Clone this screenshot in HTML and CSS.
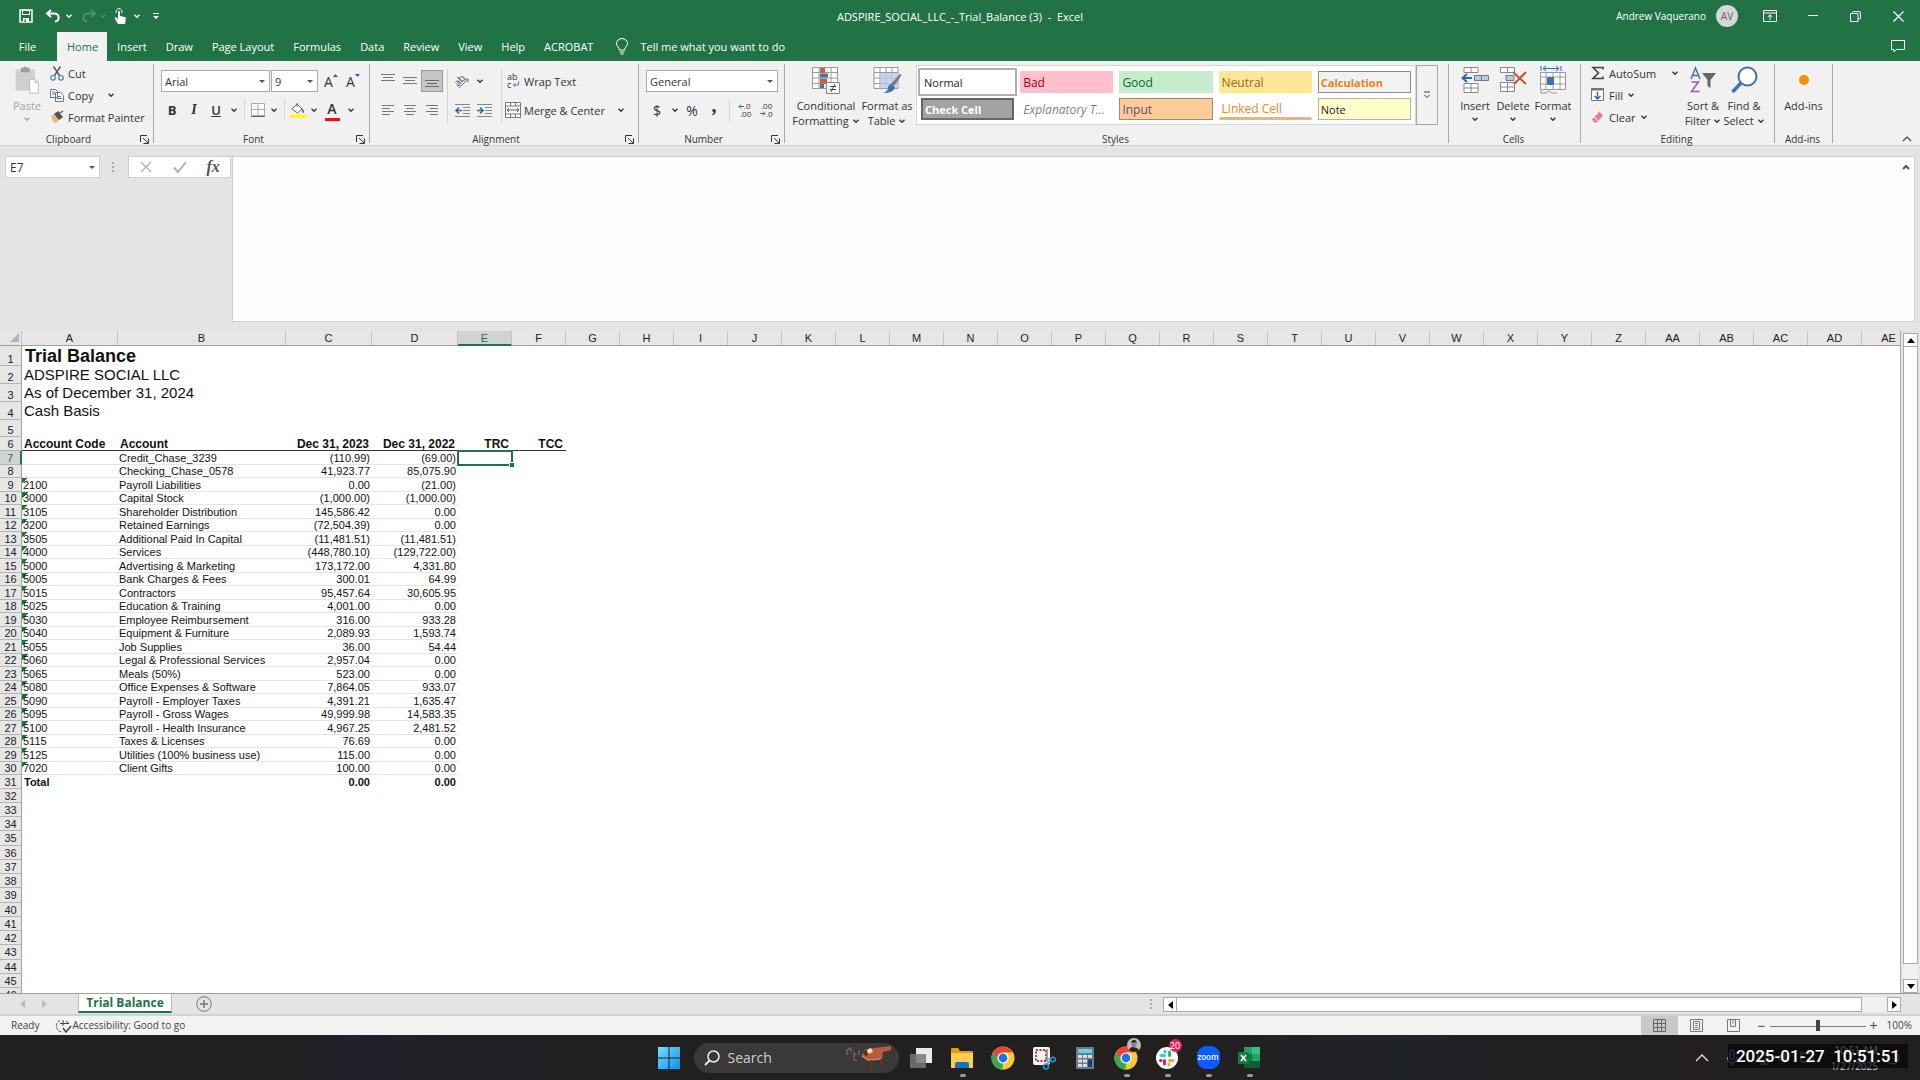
FILE: index.html
```html
<!DOCTYPE html>
<html lang="en">
<head>
<meta charset="utf-8">
<title>ADSPIRE_SOCIAL_LLC_-_Trial_Balance (3) - Excel</title>
<link rel="stylesheet" href="styles.css">
</head>
<body>
<svg class="sprite" aria-hidden="true">
  <symbol id="chev" viewBox="0 0 8 8"><path d="M1.500 2.800L4 5.300l2.500-2.500" fill="none" stroke="currentColor" stroke-width="1.300"/></symbol>
  <symbol id="launch" viewBox="0 0 9 9"><path d="M.5 7V.5H7M3 3l5 5M8.500 3.500v5h-5" fill="none" stroke="currentColor"/></symbol>
  <symbol id="chrome" viewBox="0 0 24 24"><circle cx="12" cy="12" r="11.500" fill="#fcc934"/><path d="M2 6.250A11.500 11.500 0 0 1 22 6.250H12L7 14z" fill="#ea4335"/><path d="M2 6.250L7.200 14.800 12 17.500 11.300 23.500A11.500 11.500 0 0 1 2 6.250z" fill="#34a853"/><circle cx="12" cy="12" r="5.600" fill="#fff"/><circle cx="12" cy="12" r="4.400" fill="#1a73e8"/></symbol>
</svg>

<header class="titlebar">
  <div class="quick">
    <button class="q-save" aria-label="Save"><svg width="14" height="14" viewBox="0 0 14 14"><path d="M1 1h12v12H1z" fill="none" stroke="#fff" stroke-width="1.500"/><path d="M3 1h8v5H3zM4 9h6v4H4z" fill="#fff"/><path d="M4 2h6v3H4z" fill="#217346"/><path d="M5.500 10.500H7V13H5.500z" fill="#217346"/></svg></button>
    <button class="q-undo" aria-label="Undo"><svg width="16" height="14" viewBox="0 0 16 14"><path d="M6 1L2 4.500 6 8M2 4.500h7c6 0 6 7.500 1 8" fill="none" stroke="#fff" stroke-width="2"/></svg></button>
    <button class="q-chev" aria-label="Undo list"><svg width="8" height="8"><use href="#chev"/></svg></button>
    <button class="q-redo" aria-label="Redo"><svg width="16" height="14" viewBox="0 0 16 14"><path d="M10 1l4 3.500L10 8M14 4.500H7c-6 0-6 7.500-1 8" fill="none" stroke="#4c9068" stroke-width="2"/></svg></button>
    <button class="q-chev dim" aria-label="Redo list"><svg width="8" height="8"><use href="#chev"/></svg></button>
    <button class="q-touch" aria-label="Touch mode"><svg width="13" height="17" viewBox="0 0 13 17"><path d="M4 16L.8 10.500c-.5-1.500 1-1.500 1.600-.8L4 11V4c0-1.500 2-1.500 2 0v4l4.500 1c1.300.4 1.500 1 1.300 2L11 16z" fill="#fff"/><path d="M2.300 5a3 3 0 1 1 5.400 0" fill="none" stroke="#fff"/></svg></button>
    <button class="q-chev" aria-label="Touch options"><svg width="8" height="8"><use href="#chev"/></svg></button>
    <button class="q-more" aria-label="Customize toolbar"><svg width="6" height="8" viewBox="0 0 6 8"><path d="M0 1.500h6" stroke="#fff"/><path d="M0 4h6L3 7z" fill="#fff"/></svg></button>
  </div>
  <h1 class="doc-title">ADSPIRE_SOCIAL_LLC_-_Trial_Balance (3)&nbsp; -&nbsp; Excel</h1>
  <div class="account">
    <span class="user">Andrew Vaquerano</span><span class="avatar">AV</span>
    <button aria-label="Ribbon display options"><svg width="14" height="12" viewBox="0 0 14 12"><path d="M.5.5h13v11H.5zM.5 3h13M7 10V5M4.800 7L7 4.800 9.200 7" fill="none" stroke="#fff"/></svg></button>
    <button aria-label="Minimize"><svg width="10" height="10" viewBox="0 0 10 10"><path d="M0 4.500h10" stroke="#fff"/></svg></button>
    <button aria-label="Restore"><svg width="11" height="11" viewBox="0 0 11 11"><path d="M.5 2.500h7.500v8H.5zM2.500 2.500v-1q0-1 1-1H9q1.500 0 1.500 1.500v5q0 1-1 1H8" fill="none" stroke="#fff"/></svg></button>
    <button aria-label="Close"><svg width="11" height="11" viewBox="0 0 11 11"><path d="M.5.5l10 10M10.500.5l-10 10" stroke="#fff" stroke-width="1.200"/></svg></button>
  </div>
</header>

<nav class="tabs">
  <button class="tab file">File</button>
  <button class="tab active">Home</button>
  <button class="tab">Insert</button>
  <button class="tab">Draw</button>
  <button class="tab">Page Layout</button>
  <button class="tab">Formulas</button>
  <button class="tab">Data</button>
  <button class="tab">Review</button>
  <button class="tab">View</button>
  <button class="tab">Help</button>
  <button class="tab">ACROBAT</button>
  <button class="tab tell"><svg width="12" height="17" viewBox="0 0 12 17"><path d="M3.500 12c0-2.500-3-3.500-3-6.500a5.500 5 0 0 1 11 0c0 3-3 4-3 6.500zM3.500 14h5M4.500 16h3" fill="none" stroke="#fff"/></svg>Tell me what you want to do</button>
  <button class="comment" aria-label="Comments"><svg width="14" height="13" viewBox="0 0 14 13"><path d="M.5.5h13v9H5.500L3 12V9.500H.5z" fill="none" stroke="#fff"/></svg></button>
</nav>

<section class="ribbon" aria-label="Home ribbon">
  <div class="group g-clip">
    <div class="body">
      <button class="big paste"><svg width="28" height="32" viewBox="0 0 28 32"><path d="M1 4h22v24H1z" fill="#cfcfcf"/><path d="M7 2h3q2-3 4 0h3v5H7z" fill="#9c9c9c"/><path d="M17 15h6l4 4v12H17z" fill="#fff" stroke="#b5b5b5"/><path d="M23 15v4h4" fill="none" stroke="#b5b5b5"/></svg><span>Paste</span><svg width="8" height="8"><use href="#chev"/></svg></button>
      <div class="stack">
        <button class="line"><svg width="14" height="15" viewBox="0 0 14 15"><path d="M3.500.5l6 9M10.500.5l-6 9" stroke="#555" stroke-width="1.400"/><circle cx="3" cy="11.800" r="2.300" fill="none" stroke="#4a7ebb" stroke-width="1.200"/><circle cx="11" cy="11.800" r="2.300" fill="none" stroke="#4a7ebb" stroke-width="1.200"/></svg>Cut</button>
        <button class="line"><svg width="14" height="14" viewBox="0 0 14 14"><path d="M.5 1.500h5l2 2v6h-7zM5.500 4.500h5l3 3v6h-8z" fill="#fff" stroke="#777"/><path d="M2 4h3M2 6h3M7 8.500h4M7 10.500h5" stroke="#4a7ebb"/></svg>Copy<svg class="gap-chev" width="8" height="8"><use href="#chev"/></svg></button>
        <button class="line"><svg width="14" height="14" viewBox="0 0 14 14"><path d="M1 6l4-2 5 5-4 4Q2 12 1 6z" fill="#eabb72"/><path d="M5 4l3-2 4 5-3 2zM10 3l3-2" fill="#555" stroke="#555" stroke-width="1.500"/></svg>Format Painter</button>
      </div>
    </div>
    <div class="label"><span>Clipboard</span><button aria-label="Clipboard settings"><svg width="9" height="9"><use href="#launch"/></svg></button></div>
  </div>

  <div class="group g-font">
    <div class="body rows">
      <div class="row">
        <span class="combo w-font"><select aria-label="Font"><option>Arial</option></select></span>
        <span class="combo w-size"><select aria-label="Font size"><option>9</option></select></span>
        <button class="ic" aria-label="Grow font"><span class="aa">A</span><svg width="5" height="14" viewBox="0 0 5 14"><path d="M0 3h5L2.500 0z" fill="#3b5f8f"/></svg></button>
        <button class="ic" aria-label="Shrink font"><span class="aa">A</span><svg width="5" height="14" viewBox="0 0 5 14"><path d="M0 0h5L2.500 3z" fill="#3b5f8f"/></svg></button>
      </div>
      <div class="row">
        <button class="ic bold">B</button><button class="ic italic">I</button><button class="ic under">U</button>
        <button class="dd" aria-label="Underline styles"><svg width="8" height="8"><use href="#chev"/></svg></button>
        <i class="sep"></i>
        <button class="ic n" aria-label="Borders"><svg width="14" height="14" viewBox="0 0 14 14"><path d="M.5.5h13v12H.5zM7 .5v12M.5 6.500h13" fill="#fff" stroke="#aaa"/><path d="M0 13.500h14" stroke="#666"/></svg></button>
        <button class="dd" aria-label="Border styles"><svg width="8" height="8"><use href="#chev"/></svg></button>
        <i class="sep"></i>
        <button class="ic n" aria-label="Fill color"><svg width="16" height="16" viewBox="0 0 16 16"><path d="M2 7l5-5 5 5-4.500 4z" fill="#fff" stroke="#666"/><path d="M7 5V1" stroke="#666"/><path d="M12 6q3 3 1.500 5Q11 11 12 6z" fill="#4a7ebb"/><path d="M0 12.500h16V16H0z" fill="#ff0"/></svg></button>
        <button class="dd" aria-label="Fill colors"><svg width="8" height="8"><use href="#chev"/></svg></button>
        <button class="ic fontcolor" aria-label="Font color">A</button>
        <button class="dd" aria-label="Font colors"><svg width="8" height="8"><use href="#chev"/></svg></button>
      </div>
    </div>
    <div class="label"><span>Font</span><button aria-label="Font settings"><svg width="9" height="9"><use href="#launch"/></svg></button></div>
  </div>

  <div class="group g-align">
    <div class="body">
      <div class="rows">
        <div class="row">
          <button class="ic" aria-label="Top align"><svg width="14" height="16" viewBox="0 0 14 16"><path d="M0 1.500h14M2 4.500h10M0 7.500h14" stroke="#777"/></svg></button>
          <button class="ic" aria-label="Middle align"><svg width="14" height="16" viewBox="0 0 14 16"><path d="M0 4.500h14M2 7.500h10M0 10.500h14" stroke="#777"/></svg></button>
          <button class="ic on" aria-label="Bottom align"><svg width="14" height="16" viewBox="0 0 14 16"><path d="M0 7.500h14M2 10.500h10M0 13.500h14" stroke="#666"/></svg></button>
        </div>
        <div class="row">
          <button class="ic" aria-label="Align left"><svg width="12" height="10" viewBox="0 0 12 10"><path d="M0 .5h12M0 3.500h8M0 6.500h12M0 9.500h8" stroke="#777"/></svg></button>
          <button class="ic" aria-label="Center"><svg width="12" height="10" viewBox="0 0 12 10"><path d="M0 .5h12M2 3.500h8M0 6.500h12M2 9.500h8" stroke="#777"/></svg></button>
          <button class="ic" aria-label="Align right"><svg width="12" height="10" viewBox="0 0 12 10"><path d="M0 .5h12M4 3.500h8M0 6.500h12M4 9.500h8" stroke="#777"/></svg></button>
        </div>
      </div>
      <i class="sep tall"></i>
      <div class="rows">
        <div class="row">
          <button class="ic" aria-label="Orientation"><svg width="16" height="16" viewBox="0 0 16 16"><text x="1" y="11" font-size="10" fill="#444" transform="rotate(-45 6 9)">ab</text><path d="M5 15L14 6M14 9.500V6h-3.500" fill="none" stroke="#777"/></svg></button>
          <button class="dd" aria-label="Orientation list"><svg width="8" height="8"><use href="#chev"/></svg></button>
        </div>
        <div class="row">
          <button class="ic" aria-label="Decrease indent"><svg width="15" height="13" viewBox="0 0 15 13"><path d="M0 .5h15M8 3.500h7M8 6.500h7M8 9.500h7M0 12.500h15" stroke="#888"/><path d="M7 6.500H1M4 3.500l-3 3 3 3" fill="none" stroke="#2f69a8" stroke-width="1.600"/></svg></button>
          <button class="ic" aria-label="Increase indent"><svg width="15" height="13" viewBox="0 0 15 13"><path d="M0 .5h15M8 3.500h7M8 6.500h7M8 9.500h7M0 12.500h15" stroke="#888"/><path d="M0 6.500h6M3 3.500l3 3-3 3" fill="none" stroke="#2f69a8" stroke-width="1.600"/></svg></button>
        </div>
      </div>
      <i class="sep tall"></i>
      <div class="rows">
        <div class="row">
          <button class="cmd"><svg width="16" height="16" viewBox="0 0 16 16"><text x="2" y="7" font-size="9" fill="#333">ab</text><text x="2" y="15" font-size="9" fill="#333">c</text><path d="M13.500 8v4H8.500M10.500 10l-2 2 2 2" fill="none" stroke="#4a7ebb"/></svg>Wrap Text</button>
        </div>
        <div class="row">
          <button class="cmd"><svg width="16" height="16" viewBox="0 0 16 16"><path d="M.5.5h15v15H.5zM.5 4h15M.5 12h15M5.500.5V4M10.500.5V4M5.500 12v3.500M10.500 12v3.500" fill="#fff" stroke="#777"/><path d="M2 8h12M4 6L2 8l2 2M12 6l2 2-2 2" fill="none" stroke="#2f69a8"/></svg>Merge &amp; Center</button>
          <button class="dd far" aria-label="Merge options"><svg width="8" height="8"><use href="#chev"/></svg></button>
        </div>
      </div>
    </div>
    <div class="label"><span>Alignment</span><button aria-label="Alignment settings"><svg width="9" height="9"><use href="#launch"/></svg></button></div>
  </div>

  <div class="group g-number">
    <div class="body rows">
      <div class="row"><span class="combo w-num"><select aria-label="Number format"><option>General</option></select></span></div>
      <div class="row">
        <button class="ic num">$</button><button class="dd" aria-label="Currencies"><svg width="8" height="8"><use href="#chev"/></svg></button>
        <button class="ic num">%</button><button class="ic comma">,</button>
        <i class="sep"></i>
        <button class="ic" aria-label="Increase decimal"><svg width="14" height="14" viewBox="0 0 14 14"><text x="6" y="6" font-size="8" fill="#333">.0</text><text x="2" y="14" font-size="8" fill="#333">.00</text><path d="M6 3.500H1M3 1.500l-2 2 2 2" fill="none" stroke="#2f69a8"/></svg></button>
        <button class="ic" aria-label="Decrease decimal"><svg width="14" height="14" viewBox="0 0 14 14"><text x="1" y="6" font-size="8" fill="#333">.00</text><text x="6" y="14" font-size="8" fill="#333">.0</text><path d="M0 10.500h5M3 8.500l2 2-2 2" fill="none" stroke="#2f69a8"/></svg></button>
      </div>
    </div>
    <div class="label"><span>Number</span><button aria-label="Number settings"><svg width="9" height="9"><use href="#launch"/></svg></button></div>
  </div>

  <div class="group g-styles">
    <div class="body">
      <button class="big cond"><svg width="30" height="28" viewBox="0 0 30 28"><path d="M1.500 1.500h25v21h-25zM8 1.500v21M20 1.500v21M1.500 6.500h25M1.500 12h25M1.500 17.500h25" fill="#fff" stroke="#999"/><path d="M9 2h5v5H9zM9 12.500h7v5H9z" fill="#d05a3c"/><path d="M9 7.500h8v4H9zM9 18h4v4H9z" fill="#3f72b0"/><path d="M15.500 16.500h13v11h-13z" fill="#fff" stroke="#888"/><path d="M19 20.500h6M19 23.500h6M24 18l-4 8" stroke="#444"/></svg><span>Conditional<br>Formatting <svg width="8" height="8"><use href="#chev"/></svg></span></button>
      <button class="big table"><svg width="30" height="28" viewBox="0 0 30 28"><path d="M2 1.500h24v21H2zM8 1.500v21M14 1.500v21M20 1.500v21M2 6.500h24M2 12h24M2 17.500h24" fill="#fff" stroke="#999"/><path d="M8.500 7H26v15H8.500z" fill="#b7cbe6" opacity=".8"/><path d="M28 8q3-1-1 5l-5 7-3-2z" fill="#777"/><path d="M19 18l4 3q-1 6-12 6 5-2 5-5 0-3 3-4z" fill="#3f72b0"/></svg><span>Format as<br>Table <svg width="8" height="8"><use href="#chev"/></svg></span></button>
      <div class="gallery">
        <button class="st small normal">Normal</button><button class="st bad">Bad</button><button class="st good">Good</button><button class="st neutral">Neutral</button><button class="st small calc">Calculation</button>
        <button class="st small check">Check Cell</button><button class="st expl">Explanatory T...</button><button class="st input">Input</button><button class="st linked">Linked Cell</button><button class="st small note">Note</button>
      </div>
      <button class="gal-more" aria-label="More styles"><svg width="8" height="8" viewBox="0 0 8 8"><path d="M1 1h6" stroke="#444"/><path d="M1.500 4L4 6.500 6.500 4" fill="none" stroke="#444"/></svg></button>
    </div>
    <div class="label plain"><span>Styles</span></div>
  </div>

  <div class="group g-cells">
    <div class="body">
      <button class="big c1"><svg width="28" height="28" viewBox="0 0 28 28"><path d="M3 1.500h14v5H3zM10 1.500v5M3 17.500h14v9H3zM10 17.500v9M3 22h14" fill="#fff" stroke="#888"/><path d="M13.500 9.500h14v5h-14zM20.500 9.500v5" fill="#b7cbe6" stroke="#777"/><path d="M11 12H1.500M6 8l-4.500 4L6 16" fill="none" stroke="#2f69a8" stroke-width="2"/></svg><span>Insert</span><svg width="8" height="8"><use href="#chev"/></svg></button>
      <button class="big c1"><svg width="28" height="28" viewBox="0 0 28 28"><path d="M1.500 1.500h14v5h-14zM8.500 1.500v5M1.500 16.500h14v9h-14zM8.500 16.500v9M1.500 21h14" fill="#fff" stroke="#888"/><path d="M7 9.500h8v5H7z" fill="#b7cbe6" stroke="#777"/><path d="M14 6l13 12M27 6L15 18" stroke="#cc4b34" stroke-width="2"/></svg><span>Delete</span><svg width="8" height="8"><use href="#chev"/></svg></button>
      <button class="big c2"><svg width="28" height="28" viewBox="0 0 28 28"><path d="M1.500 6.500h25v17h-25zM7 6.500v17M14 6.500v17M21 6.500v17M1.500 11h25M1.500 18h25" fill="#fff" stroke="#999"/><path d="M8 11h7v8H8z" fill="#3f72b0"/><path d="M2 0v5M22 0v5M4 2.500h16M7 0L4 2.500 7 5M17 0l3 2.500L17 5" fill="none" stroke="#2f69a8"/><path d="M2 24v3h5l3-2 3 2h5" fill="none" stroke="#999"/></svg><span>Format</span><svg width="8" height="8"><use href="#chev"/></svg></button>
    </div>
    <div class="label plain"><span>Cells</span></div>
  </div>

  <div class="group g-edit">
    <div class="body">
      <div class="stack">
        <button class="line"><svg width="14" height="14" viewBox="0 0 14 14"><path d="M12 3.500V1.500H2L7.500 7 2 12.500h10v-2" fill="none" stroke="#444" stroke-width="1.600"/></svg>AutoSum<svg class="gap-sum" width="8" height="8"><use href="#chev"/></svg></button>
        <button class="line"><svg width="14" height="14" viewBox="0 0 14 14"><path d="M.5.5h12v12H.5z" fill="#fff" stroke="#777"/><path d="M0 1.500h13" stroke="#777" stroke-width="2"/><path d="M6.500 4v7M3.500 8l3 3 3-3" fill="none" stroke="#2f69a8" stroke-width="1.500"/></svg>Fill <svg width="8" height="8"><use href="#chev"/></svg></button>
        <button class="line"><svg width="14" height="14" viewBox="0 0 14 14"><path d="M8.500 1.500l3.500 4-6 7H3L1 9.500z" fill="#e87b9c"/><path d="M3.500 7l3.500 4" stroke="#fff"/></svg>Clear <svg width="8" height="8"><use href="#chev"/></svg></button>
      </div>
      <button class="big e1"><svg width="28" height="28" viewBox="0 0 28 28"><path d="M2 13L6.500 2 11 13M3.500 9.500h6" fill="none" stroke="#3f72b0" stroke-width="1.500"/><path d="M2.500 16h7L2.500 25.500h8" fill="none" stroke="#9458b8" stroke-width="1.500"/><path d="M13 7h14l-5.500 7v8l-3-2v-6z" fill="#666"/></svg><span>Sort &amp;<br>Filter <svg width="8" height="8"><use href="#chev"/></svg></span></button>
      <button class="big e2"><svg width="28" height="28" viewBox="0 0 28 28"><circle cx="17.500" cy="10.500" r="9" fill="#fff" stroke="#3f72b0" stroke-width="2"/><path d="M11 17L2.500 26" stroke="#3f72b0" stroke-width="3.500"/></svg><span>Find &amp;<br>Select <svg width="8" height="8"><use href="#chev"/></svg></span></button>
    </div>
    <div class="label plain"><span>Editing</span></div>
  </div>

  <div class="group g-add">
    <div class="body"><button class="big addins"><svg width="28" height="28" viewBox="0 0 28 28"><circle cx="14" cy="14" r="5" fill="#ff8c00"/></svg><span>Add-ins</span></button></div>
    <div class="label plain"><span>Add-ins</span></div>
  </div>
  <div class="ribbon-end"><button aria-label="Collapse ribbon"><svg width="10" height="8" viewBox="0 0 10 8"><path d="M1 6l4-4 4 4" fill="none" stroke="#444" stroke-width="1.200"/></svg></button></div>
</section>

<section class="formula">
  <span class="combo namebox"><input aria-label="Name box" value="E7"></span>
  <span class="dots"></span>
  <div class="fx">
    <button aria-label="Cancel"><svg width="12" height="12" viewBox="0 0 12 12"><path d="M1 1l10 10M11 1L1 11" stroke="#b0b0b0" stroke-width="1.300"/></svg></button>
    <button aria-label="Enter"><svg width="14" height="12" viewBox="0 0 14 12"><path d="M1 6.500L5 11l8-10" fill="none" stroke="#b0b0b0" stroke-width="2"/></svg></button>
    <button class="fn">fx</button>
  </div>
  <div class="bar"><textarea aria-label="Formula bar"></textarea><button aria-label="Collapse formula bar"><svg width="8" height="6" viewBox="0 0 8 6"><path d="M1 5l3-3 3 3" fill="none" stroke="#555" stroke-width="2"/></svg></button></div>
</section>

<main class="work">
  <div class="sheet">
    <table>
      <colgroup><col class="k-row"><col class="k-a"><col class="k-b"><col class="k-cd" span="2"><col class="k-n" span="27"></colgroup>
      <thead><tr><th class="corner"><svg width="9" height="9" viewBox="0 0 9 9"><path d="M9 0v9H0z" fill="#b4b4b4"/></svg></th><th>A</th><th>B</th><th>C</th><th>D</th><th class="sel">E</th><th>F</th><th>G</th><th>H</th><th>I</th><th>J</th><th>K</th><th>L</th><th>M</th><th>N</th><th>O</th><th>P</th><th>Q</th><th>R</th><th>S</th><th>T</th><th>U</th><th>V</th><th>W</th><th>X</th><th>Y</th><th>Z</th><th>AA</th><th>AB</th><th>AC</th><th>AD</th><th>AE</th></tr></thead>
      <tbody class="head">
        <tr class="r1"><th>1</th><td class="title">Trial Balance</td></tr>
        <tr class="r2"><th>2</th><td>ADSPIRE SOCIAL LLC</td></tr>
        <tr class="r2"><th>3</th><td>As of December 31, 2024</td></tr>
        <tr class="r2"><th>4</th><td>Cash Basis</td></tr>
        <tr class="r5"><th>5</th><td></td></tr>
        <tr class="cols"><th>6</th><td>Account Code</td><td>Account</td><td class="r">Dec 31, 2023</td><td class="r">Dec 31, 2022</td><td class="r wide">TRC</td><td class="r wide">TCC</td></tr>
      </tbody>
      <tbody class="data">
        <tr><th class="sel">7</th><td></td><td>Credit_Chase_3239</td><td>(110.99)</td><td>(69.00)</td><td class="cursor"></td></tr>
        <tr><th>8</th><td></td><td>Checking_Chase_0578</td><td>41,923.77</td><td>85,075.90</td></tr>
        <tr><th>9</th><td class="code">2100</td><td>Payroll Liabilities</td><td>0.00</td><td>(21.00)</td></tr>
        <tr><th>10</th><td class="code">3000</td><td>Capital Stock</td><td>(1,000.00)</td><td>(1,000.00)</td></tr>
        <tr><th>11</th><td class="code">3105</td><td>Shareholder Distribution</td><td>145,586.42</td><td>0.00</td></tr>
        <tr><th>12</th><td class="code">3200</td><td>Retained Earnings</td><td>(72,504.39)</td><td>0.00</td></tr>
        <tr><th>13</th><td class="code">3505</td><td>Additional Paid In Capital</td><td>(11,481.51)</td><td>(11,481.51)</td></tr>
        <tr><th>14</th><td class="code">4000</td><td>Services</td><td>(448,780.10)</td><td>(129,722.00)</td></tr>
        <tr><th>15</th><td class="code">5000</td><td>Advertising &amp; Marketing</td><td>173,172.00</td><td>4,331.80</td></tr>
        <tr><th>16</th><td class="code">5005</td><td>Bank Charges &amp; Fees</td><td>300.01</td><td>64.99</td></tr>
        <tr><th>17</th><td class="code">5015</td><td>Contractors</td><td>95,457.64</td><td>30,605.95</td></tr>
        <tr><th>18</th><td class="code">5025</td><td>Education &amp; Training</td><td>4,001.00</td><td>0.00</td></tr>
        <tr><th>19</th><td class="code">5030</td><td>Employee Reimbursement</td><td>316.00</td><td>933.28</td></tr>
        <tr><th>20</th><td class="code">5040</td><td>Equipment &amp; Furniture</td><td>2,089.93</td><td>1,593.74</td></tr>
        <tr><th>21</th><td class="code">5055</td><td>Job Supplies</td><td>36.00</td><td>54.44</td></tr>
        <tr><th>22</th><td class="code">5060</td><td>Legal &amp; Professional Services</td><td>2,957.04</td><td>0.00</td></tr>
        <tr><th>23</th><td class="code">5065</td><td>Meals (50%)</td><td>523.00</td><td>0.00</td></tr>
        <tr><th>24</th><td class="code">5080</td><td>Office Expenses &amp; Software</td><td>7,864.05</td><td>933.07</td></tr>
        <tr><th>25</th><td class="code">5090</td><td>Payroll - Employer Taxes</td><td>4,391.21</td><td>1,635.47</td></tr>
        <tr><th>26</th><td class="code">5095</td><td>Payroll - Gross Wages</td><td>49,999.98</td><td>14,583.35</td></tr>
        <tr><th>27</th><td class="code">5100</td><td>Payroll - Health Insurance</td><td>4,967.25</td><td>2,481.52</td></tr>
        <tr><th>28</th><td class="code">5115</td><td>Taxes &amp; Licenses</td><td>76.69</td><td>0.00</td></tr>
        <tr><th>29</th><td class="code">5125</td><td>Utilities (100% business use)</td><td>115.00</td><td>0.00</td></tr>
        <tr><th>30</th><td class="code">7020</td><td>Client Gifts</td><td>100.00</td><td>0.00</td></tr>
        <tr class="total"><th>31</th><td>Total</td><td></td><td>0.00</td><td>0.00</td></tr>
      </tbody>
      <tbody class="empty">
        <tr><th>32</th></tr><tr><th>33</th></tr><tr><th>34</th></tr><tr><th>35</th></tr><tr><th>36</th></tr><tr><th>37</th></tr><tr><th>38</th></tr><tr><th>39</th></tr><tr><th>40</th></tr><tr><th>41</th></tr><tr><th>42</th></tr><tr><th>43</th></tr><tr><th>44</th></tr><tr><th>45</th></tr><tr><th>46</th></tr>
      </tbody>
    </table>
  </div>
  <div class="vscroll">
    <button aria-label="Scroll up"><svg width="8" height="5" viewBox="0 0 8 5"><path d="M0 5h8L4 0z"/></svg></button>
    <div class="thumb"></div><div class="track"></div>
    <button aria-label="Scroll down"><svg width="8" height="5" viewBox="0 0 8 5"><path d="M0 0h8L4 5z"/></svg></button>
  </div>
</main>

<div class="sheettabs">
  <button class="nav" aria-label="Previous sheet"><svg width="5" height="8" viewBox="0 0 5 8"><path d="M5 0v8L0 4z" fill="#bbb"/></svg></button>
  <button class="nav" aria-label="Next sheet"><svg width="5" height="8" viewBox="0 0 5 8"><path d="M0 0v8l5-4z" fill="#bbb"/></svg></button>
  <button class="sheettab">Trial Balance</button>
  <button class="plus" aria-label="New sheet"><svg width="16" height="16" viewBox="0 0 16 16"><path d="M8 4v8M4 8h8" stroke="#777" stroke-width="1.500"/><circle cx="8" cy="8" r="7.300" fill="none" stroke="#777"/></svg></button>
  <span class="dots"></span>
  <div class="hscroll">
    <button aria-label="Scroll left"><svg width="5" height="8" viewBox="0 0 5 8"><path d="M5 0v8L0 4z"/></svg></button>
    <div class="thumb"></div><div class="track"></div>
    <button aria-label="Scroll right"><svg width="5" height="8" viewBox="0 0 5 8"><path d="M0 0v8l5-4z"/></svg></button>
  </div>
</div>

<footer class="status">
  <span class="ready">Ready</span>
  <button class="access"><svg width="15" height="14" viewBox="0 0 15 14"><path d="M4 1.500A6 6 0 0 0 6 13" fill="none" stroke="#555" stroke-dasharray="3 1"/><path d="M7 1v6M4 4.500h9M10 2l3 2.500" fill="none" stroke="#444"/><path d="M7 9l3 4 5-6" fill="none" stroke="#444" stroke-width="1.500"/></svg>Accessibility: Good to go</button>
  <div class="views">
    <button class="on" aria-label="Normal view"><svg width="13" height="13" viewBox="0 0 13 13"><path d="M.5.5h12v12H.5zM4.500.5v12M8.500.5v12M.5 4.500h12M.5 8.500h12" fill="none" stroke="#666"/></svg></button>
    <button aria-label="Page layout view"><svg width="13" height="13" viewBox="0 0 13 13"><path d="M.5.5h12v12H.5zM3.500 2.500h6v8h-6zM5 4.500h3M5 6.500h3M5 8.500h3" fill="none" stroke="#777"/></svg></button>
    <button aria-label="Page break view"><svg width="13" height="13" viewBox="0 0 13 13"><path d="M.5.5h12v12H.5zM3.500.5v7h5v-7M6 .5v4" fill="none" stroke="#777"/></svg></button>
  </div>
  <div class="zoom"><button>−</button><input type="range" aria-label="Zoom" min="0" max="100" value="50"><button>+</button><span>100%</span></div>
</footer>

<div class="taskbar">
  <div class="apps">
    <button class="app" aria-label="Start"><svg width="24" height="24" viewBox="0 0 24 24"><defs><linearGradient id="w" x1="0" y1="0" x2="1" y2="1"><stop offset="0" stop-color="#6fe0fb"/><stop offset="1" stop-color="#1490e8"/></linearGradient></defs><path d="M1 1h10.500v10.500H1zM12.500 1H23v10.500H12.500zM1 12.500h10.500V23H1zM12.500 12.500H23V23H12.500z" fill="url(#w)"/></svg></button>
    <label class="search"><svg width="16" height="16" viewBox="0 0 16 16"><circle cx="9.500" cy="6.500" r="5.500" fill="none" stroke="#eee" stroke-width="1.500"/><path d="M5.500 10.500L1 15" stroke="#eee" stroke-width="1.800"/></svg><input type="text" placeholder="Search" aria-label="Search"><svg width="48" height="26" viewBox="0 0 48 26"><path d="M2 10V5l4-2v4M9 13V8l2 2M14 5v5M8 15h4" fill="none" stroke="#666" stroke-width="1.500"/><path d="M17 8l4-4 25-3v4l-8 2-1 7-14 1-6-4z" fill="#b95a3a"/><path d="M17 8l6-4 3 3-5 4z" fill="#5e2b1c"/><path d="M22 5l4-2 2 4-5 2z" fill="#f3e3d0"/><path d="M17 11l6 4 13-1" fill="none" stroke="#dd8059" stroke-width="1.500"/><path d="M26 15v10M36 14v6M43 6v4" stroke="#6f301f" stroke-width="1.500"/></svg></label>
    <button class="app" aria-label="Task view"><svg width="24" height="24" viewBox="0 0 24 24"><path d="M7 2h16v15H7z" fill="#e9e9e9"/><path d="M1 8h16v14H1z" fill="#777" opacity=".85"/></svg></button>
    <button class="app run" aria-label="File Explorer"><svg width="24" height="24" viewBox="0 0 24 24"><path d="M1 3q0-1 1-1h6l2 3h12q1 0 1 1v4H1z" fill="#dd9a13"/><path d="M1 7h22v14q0 1-1 1H2q-1 0-1-1z" fill="#ffcf4b"/><path d="M5 22v-4q0-2 2-2h10q2 0 2 2v4z" fill="#1373c4"/></svg></button>
    <button class="app" aria-label="Chrome"><svg width="24" height="24"><use href="#chrome"/></svg></button>
    <button class="app" aria-label="Snipping Tool"><svg width="24" height="24" viewBox="0 0 24 24"><rect x="1" y="1" width="17" height="18" rx="2" fill="#f3f3f3"/><path d="M4 4h10v11H4z" fill="none" stroke="#c33" stroke-width="2" stroke-dasharray="2 1.500"/><path d="M15 3v13M13 13h6" stroke="#888" stroke-width="1.500"/><circle cx="14" cy="20.500" r="2.500" fill="none" stroke="#2a95d5" stroke-width="1.500"/><circle cx="21" cy="13.500" r="2.300" fill="none" stroke="#2a95d5" stroke-width="1.500"/><path d="M15 18l4-4" stroke="#2a95d5" stroke-width="1.500"/></svg></button>
    <button class="app" aria-label="Calculator"><svg width="24" height="24" viewBox="0 0 24 24"><path d="M3 1h18v22H3z" fill="#6d7b86"/><path d="M5 3h14v4H5z" fill="#64d2ee"/><path d="M5 9h4v3H5zM10 9h4v3h-4zM15 9h4v3h-4zM5 13.500h4v3H5zM10 13.500h4v3h-4zM5 18h4v3H5zM10 18h4v3h-4z" fill="#d7e0e6"/><path d="M15 13.500h4V21h-4z" fill="#173f7d"/></svg></button>
    <button class="app run" aria-label="Chrome profile"><svg width="24" height="24"><use href="#chrome"/></svg><span class="face"><svg width="14" height="14" viewBox="0 0 14 14"><circle cx="7" cy="7" r="7" fill="#bbb"/><path d="M2 12q1-3 4-3l4 1 2 2a7 7 0 0 1-10 0z" fill="#222"/><ellipse cx="7" cy="6" rx="2.500" ry="3.300" fill="#888"/><path d="M4.300 5q0-3 2.700-3t2.700 3L8 4z" fill="#222"/></svg></span></button>
    <button class="app run" aria-label="Slack"><svg width="24" height="24" viewBox="0 0 24 24"><circle cx="12" cy="12" r="11" fill="#fff"/><g fill="none" stroke-width="3" stroke-linecap="round"><path d="M6 9.500h3.500" stroke="#36c5f0"/><path d="M10 5v1" stroke="#36c5f0"/><path d="M14.500 6v3.500" stroke="#2eb67d"/><path d="M14.500 14.500H18M14 18v1" stroke="#ecb22e"/><path d="M9.500 14.500V18M5.500 14.500h.5" stroke="#e01e5a"/></g></svg><span class="badge">20</span></button>
    <button class="app run zoomapp"><span>zoom</span></button>
    <button class="app run" aria-label="Excel"><svg width="24" height="24" viewBox="0 0 24 24"><path d="M7 1h16v21H7z" fill="#21a366"/><path d="M15 1h8v7h-8z" fill="#33c481"/><path d="M7 8h8v7H7z" fill="#107c41"/><path d="M7 15h16v7H7z" fill="#185c37"/><path d="M1 6h11v12H1z" fill="#107c41"/><path d="M4 9l5 6M9 9l-5 6" stroke="#fff" stroke-width="1.600"/></svg></button>
  </div>
  <div class="tray">
    <button class="up" aria-label="Hidden icons"><svg width="14" height="9" viewBox="0 0 14 9"><path d="M1 8l6-6 6 6" fill="none" stroke="#ddd" stroke-width="1.400"/></svg></button>
    <div class="sys">
      <svg class="s-mic" width="10" height="18" viewBox="0 0 10 18"><rect x="3" y="1" width="4" height="10" rx="2" fill="none" stroke="#999"/><path d="M.5 8q0 6 4.500 6t4.500-6M5 14v3" fill="none" stroke="#999"/></svg>
      <svg class="s-net" width="60" height="16" viewBox="0 0 60 16"><path d="M1 3h11v8H1zM3 14h8M7 11v3M22 6h3l3-3v10l-3-3h-3zM31 5q2 3 0 6M44 3h12v9H44z" fill="none" stroke="#999"/></svg>
      <div class="clock"><span>10:51 AM</span><span>1/27/2025</span></div>
      <svg class="s-bell" width="14" height="14" viewBox="0 0 14 14"><circle cx="7" cy="7" r="6" fill="none" stroke="#999"/></svg>
      <div class="stamp">2025-01-27&nbsp; 10:51:51</div>
    </div>
  </div>
</div>
</body>
</html>
```
FILE: styles.css
```css
* { box-sizing: border-box; }
body { margin: 0; height: 100vh; display: flex; flex-direction: column; overflow: hidden; background: #e4e4e4; color: #333; font: 11px/15px "Open Sans", "Noto Sans", sans-serif; }
button { border: 0; padding: 0; margin: 0; background: none; color: inherit; font: inherit; white-space: nowrap; display: flex; align-items: center; justify-content: center; flex: none; }
input, select, textarea { font: inherit; color: inherit; border: 0; margin: 0; padding: 0; background: none; border-radius: 0; outline: 0; min-width: 0; }
svg { flex: none; overflow: visible; }
.sprite { position: absolute; width: 0; height: 0; }

/* title bar */
.titlebar { display: grid; grid-template-columns: 1fr auto 1fr; align-items: center; height: 32px; flex: none; background: #217346; color: #fff; }
.quick { display: flex; align-items: center; padding-left: 15px; }
.q-save { width: 22px; } .q-undo { width: 24px; margin-left: 4px; } .q-redo { width: 20px; margin-left: 6px; } .q-touch { width: 14px; }
.q-chev { width: 8px; margin-right: 6px; }
.q-undo + .q-chev { margin-right: 0; }
.q-touch + .q-chev { margin-left: 6px; margin-right: 11px; }
.q-more { width: 8px; }
.dim { color: #4c9068; }
.doc-title { margin: 0; font-size: 11px; font-weight: 400; }
.account { display: flex; align-items: center; justify-content: flex-end; }
.account button { width: 43px; height: 26px; }
.user { font-size: 10px; }
.avatar { width: 22px; height: 22px; line-height: 22px; margin: 0 10px; border-radius: 50%; background: #d5d8d6; color: #666; text-align: center; font-size: 10px; }

/* tabs */
.tabs { display: flex; height: 29px; flex: none; background: #217346; color: #fff; }
.tab { padding: 0 9px 0 10px; }
.tab.file { width: 57px; padding-right: 12px; }
.tab.active { background: #f1f1f1; color: #217346; }
.tab.tell { gap: 12px; padding-left: 14px; }
.comment { margin-left: auto; width: 44px; }

/* ribbon */
.ribbon { display: flex; height: 85px; flex: none; background: #f1f1f1; border-bottom: 1px solid #d0d0d0; }
.group { display: flex; flex-direction: column; border-right: 1px solid #a8a8a8; margin: 3px 0 2px; flex: none; }
.body { display: flex; flex: 1; min-height: 0; padding-top: 5px; }
.label { display: flex; height: 8px; align-items: center; padding-right: 2px; font-size: 10px; }
.label span { flex: 1; text-align: center; }
.label button { width: 14px; height: 14px; }
.g-clip { width: 154px; } .g-font { width: 216px; } .g-align { width: 269px; } .g-number { width: 146px; }
.g-styles { flex: 1 1 0; } .g-cells { width: 132px; } .g-edit { width: 194px; } .g-add { width: 58px; }
.ribbon-end { width: 87px; display: flex; align-items: flex-end; justify-content: flex-end; padding: 0 8px 2px 0; }
.rows { display: flex; flex-direction: column; gap: 5px; }
.row { display: flex; align-items: center; height: 24px; }
.g-font .body, .g-align .body { padding-left: 7px; }
.g-number .body { padding-left: 7px; }
.big { flex-direction: column; justify-content: flex-start; line-height: 15px; }
.big > svg:first-child { margin: -3px 0 4px; height: 28px; }
.big.paste { color: #a6a6a6; width: 46px; margin-left: 4px; }
.big > svg:last-child { margin-top: 2px; }
.stack { display: flex; flex-direction: column; margin-top: -7px; }
.line { height: 22px; gap: 4px; justify-content: flex-start; }
.gap-chev { margin-left: 9px; } .gap-sum { margin-left: 11px; }
.combo { position: relative; display: flex; height: 22px; border: 1px solid #ababab; background: #fff; flex: none; }
.combo::after { content: ""; position: absolute; right: 4px; top: 9px; border: 3px solid transparent; border-top-color: #555; pointer-events: none; }
.combo select { appearance: none; width: 100%; padding-left: 3px; }
.w-font { width: 109px; margin-right: 1px; } .w-size { width: 47px; margin-right: 2px; } .w-num { width: 132px; }
.ic { width: 22px; height: 22px; }
.ic.n { width: 18px; }
.ic.on { background: #c6c6c6; border: 1px solid #999; }
.aa { font-size: 14px; }
.bold { font-weight: 700; font-size: 13px; }
.italic { font: italic 700 14px "Liberation Serif", serif; }
.under { font-weight: 600; font-size: 13px; text-decoration: underline; }
.fontcolor { width: 24px; font-weight: 600; font-size: 14px; background: linear-gradient(#e81010, #e81010) 5px 19px / 15px 3px no-repeat; padding-bottom: 4px; }
.num { font-size: 14px; } .comma { font: 700 20px "Liberation Serif", serif; padding-bottom: 10px; }
.dd { width: 13px; height: 22px; }
.dd.far { margin-left: 10px; }
.sep { width: 1px; height: 22px; background: #d5d5d5; margin: 0 4px; }
.sep.tall { height: 54px; margin: 0 3px 0 4px; }
.cmd { gap: 3px; }
.g-align .rows:nth-child(3) { width: 46px; }
.cond { width: 64px; margin-left: 9px; } .table { width: 58px; }
.gallery { display: grid; grid-template-columns: repeat(5, 1fr); grid-auto-rows: 22px; gap: 5px 6px; flex: 1; height: 60px; padding: 5px 4px; background: #fff; border: 1px solid #d5d5d5; margin-top: -4px; }
.gal-more { width: 22px; height: 60px; border: 1px solid #a5a5a5; margin: -4px 10px 0 0; }
.st { justify-content: flex-start; padding-left: 2px; font-size: 12px; color: #222; border: 1px solid transparent; min-width: 0; overflow: hidden; }
.st.small { font-size: 11px; }
.normal { background: #fff; outline: 2px solid #b0b0b0; outline-offset: 1px; }
.bad { background: #ffc0cb; color: #9c0018; } .good { background: #c5eccd; color: #0a6a1a; } .neutral { background: #ffe699; color: #9c6a10; }
.calc { background: #f2f2f2; border-color: #8b8b8b; color: #f07d10; font-weight: 700; }
.check { background: #a2a2a2; border: 2px solid #666; color: #fff; font-weight: 700; }
.expl { font-style: italic; color: #7f7f7f; }
.input { background: #ffcb99; border-color: #a08a70; color: #5c4f70; }
.linked { color: #e88a2a; border-bottom: 3px solid #e6b676; }
.note { background: #ffffcc; border-color: #b5b5a0; }
.g-cells .body { padding-left: 7px; }
.c1 { width: 38px; } .c2 { width: 42px; }
.g-edit .stack { width: 102px; padding-left: 10px; } .e1 { width: 40px; } .e2 { width: 42px; }
.addins { width: 57px; }

/* formula bar */
.formula { display: flex; height: 185px; flex: none; padding: 10px 5px 9px; }
.namebox { width: 95px; background: #fff; border-color: #cfcfcf; }
.namebox input { width: 80px; padding-left: 4px; font-size: 12px; }
.dots { width: 2px; height: 11px; background: repeating-linear-gradient(#aaa 0 2px, transparent 2px 4px); align-self: flex-start; margin: 6px 14px 0 12px; flex: none; }
.fx { display: flex; width: 103px; height: 22px; background: #fff; border: 1px solid #cfcfcf; flex: none; }
.fx button { flex: 1; }
.fn { font: italic 700 16px "Liberation Serif", serif; color: #555; }
.bar { flex: 1; display: flex; margin-left: 1px; background: #fdfdfd; border: 1px solid #cfcfcf; }
.bar textarea { flex: 1; resize: none; }
.bar button { width: 16px; height: 20px; }

/* worksheet */
.work { flex: 1 1 0; min-height: 0; display: flex; }
.sheet { flex: 1; min-width: 0; overflow: hidden; background: #fff; border-right: 1px solid #aaa; font: 11px/12px "Liberation Sans", Arial, sans-serif; color: #111; }
.sheet table { table-layout: fixed; width: 1916px; border-collapse: separate; border-spacing: 0; }
.sheet th, .sheet td { padding: 0; height: inherit; white-space: nowrap; }
.k-row { width: 22px; } .k-a { width: 96px; } .k-b { width: 168px; } .k-cd { width: 86px; } .k-n { width: 54px; }
.sheet th { background: #e6e6e6; font-weight: 400; border-right: 1px solid #b5b5b5; border-bottom: 1px solid #b5b5b5; color: #222; }
.sheet thead th { height: 15px; border-right-color: #c4c4c4; border-bottom-color: #a0a0a0; }
.sheet thead .corner { text-align: right; line-height: 9px; padding-right: 2px; }
.sheet thead .sel { background: #d2d2d2; color: #217346; border-bottom: 2px solid #217346; }
.sheet tbody th { border-right-color: #a0a0a0; }
.head td { font-size: 15px; line-height: 16px; padding: 0 0 1px 2px; vertical-align: bottom; }
.r1 { height: 20px; } .r2 { height: 18px; } .r5 { height: 17px; } .cols { height: 14px; }
.head th { vertical-align: bottom; }
.head .title { font-size: 18px; line-height: 19px; font-weight: 700; padding: 0 0 0 3px; }
.head .cols td { font-size: 12px; line-height: 12px; font-weight: 700; border-bottom: 1px solid #333; padding: 1px 0 0 2px; }
.head .cols .r { text-align: right; padding-right: 3px; }
.data tr { height: 14px; } .data tr:nth-child(even) { height: 13px; }
.data td { border-bottom: 1px solid #e6e6e6; padding-left: 1px; }
.data td:nth-child(4), .data td:nth-child(5) { text-align: right; padding-right: 2px; }
.data .code { background: linear-gradient(to bottom right, #1a7a2e 50%, transparent 50%) 0 0 / 6px 6px no-repeat; }
.data .total td { font-weight: 700; border-bottom: 0; }
.data .total td:nth-child(2) { padding-left: 2px; }
.data th.sel { background: #d2d2d2; border-right: 2px solid #217346; color: #217346; }
.data .cursor { position: relative; border: 0; outline: 2px solid #217346; outline-offset: -1px; }
.cursor::after { content: ""; position: absolute; right: -2px; bottom: -2px; width: 4px; height: 4px; background: #217346; border: solid #fff; border-width: 1px 0 0 1px; box-sizing: content-box; }
.empty tr { height: 14px; } .empty tr:nth-child(4n) { height: 15px; }

.vscroll { width: 19px; display: flex; flex-direction: column; padding: 2px 2px 0; flex: none; }
.vscroll button { height: 14px; background: #fff; border: 1px solid #aaa; }
.vscroll .thumb { flex: 1; background: #fff; border: 1px solid #aaa; border-top: 0; }
.vscroll .track { height: 15px; background: #f0f0f0; }

.sheettabs { display: flex; height: 23px; flex: none; border-top: 1px solid #9f9f9f; border-bottom: 2px solid #d2d2d2; }
.nav { width: 22px; }
.nav:first-child { margin-left: 11px; }
.sheettab { width: 94px; height: 19px; margin-left: 23px; padding-bottom: 1px; background: #fff; color: #217346; font-weight: 700; font-size: 12px; border: 1px solid #bbb; border-top: 0; border-bottom: 2px solid #217346; }
.plus { width: 22px; margin-left: 21px; }
.sheettabs .dots { margin: 5px 11px 0 auto; }
.hscroll { width: 738px; height: 15px; display: flex; margin: 3px 19px 0 0; }
.hscroll button { width: 14px; background: #fff; border: 1px solid #aaa; }
.hscroll .thumb { flex: 1; background: #fff; border: 1px solid #aaa; border-left: 0; }
.hscroll .track { width: 25px; background: #f0f0f0; }

.status { display: flex; align-items: center; height: 19px; flex: none; background: #f2f2f2; color: #444; font-size: 10px; padding: 0 8px 0 11px; }
.access { gap: 1px; margin-left: 17px; }
.views { display: flex; margin-left: auto; }
.views button { width: 37px; height: 19px; }
.views .on { background: #c8c8c8; }
.zoom { display: flex; align-items: center; }
.zoom button { width: 16px; font-size: 14px; }
.zoom button:first-child { margin-left: 2px; }
.zoom input { appearance: none; width: 96px; height: 12px; background: linear-gradient(#777, #777) 0 6px / 100% 1px no-repeat; }
.zoom input::-webkit-slider-thumb { appearance: none; width: 4px; height: 11px; background: #444; }
.zoom span { margin-left: 5px; }

/* taskbar */
.taskbar { display: grid; grid-template-columns: 1fr auto 1fr; height: 45px; flex: none; background: linear-gradient(90deg, #202020 0 15%, #21202b 18%, #202125 24%, #202020 40%, #231f1f 60%, #202229 73%, #202020 80%, #231f20 88%, #202020); color: #fff; }
.apps { grid-column: 2; display: flex; align-items: center; padding-right: 6px; }
.app { width: 41px; height: 41px; position: relative; }
.app:first-child { width: 44px; padding-left: 5px; }
.search { display: flex; align-items: center; width: 205px; height: 30px; margin: 0 2px 0 5px; padding: 0 6px 0 10px; border-radius: 15px; background: #3b3838; gap: 8px; }
.search input { flex: 1; font-size: 14px; line-height: 18px; }
.search input::placeholder { color: #d0d0d0; opacity: 1; }
.run::after { content: ""; position: absolute; left: 18px; bottom: 1px; width: 6px; height: 3px; border-radius: 2px; background: #9a9a9a; }
.face { position: absolute; left: 21px; top: 1px; width: 14px; height: 14px; display: flex; }
.badge { position: absolute; left: 22px; top: 2px; width: 13px; height: 13px; border-radius: 7px; background: #e0245e; font-size: 9px; line-height: 13px; text-align: center; }
.zoomapp span { width: 23px; height: 23px; border-radius: 9px; background: #0b5cff; font-size: 8px; font-weight: 600; line-height: 21px; }
.tray { display: flex; justify-content: flex-end; align-items: center; padding-right: 12px; }
.up { width: 30px; margin-right: 11px; }
.sys { position: relative; display: flex; align-items: center; width: 180px; height: 45px; color: #c8c8c8; font-size: 10px; }
.s-mic { margin-left: -1px; } .s-net { margin-left: 20px; }
.clock { margin-left: auto; text-align: right; display: flex; flex-direction: column; line-height: 16px; }
.s-bell { margin: 0 8px; }
.stamp { position: absolute; left: 0; top: 9px; width: 180px; height: 24px; background: rgba(0, 0, 0, .6); color: #fff; font: 500 17px/24px Roboto, sans-serif; text-align: center; white-space: nowrap; }
```
